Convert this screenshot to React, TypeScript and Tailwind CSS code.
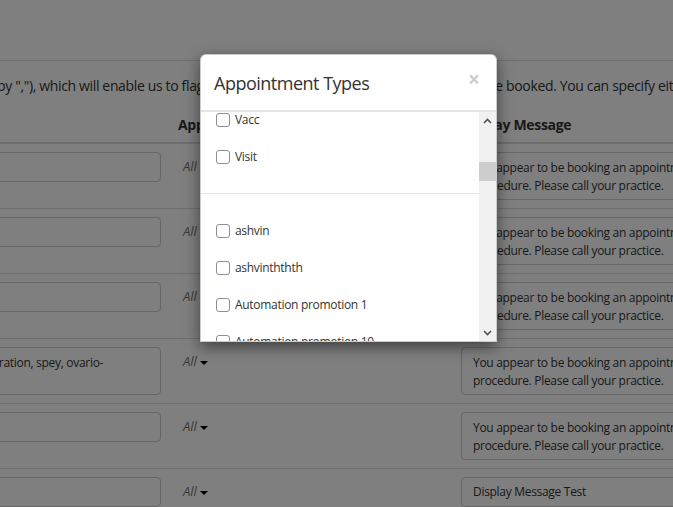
import React from "react";

type Row = {
  keywords: string;
  tall?: boolean;
  message: string;
  short?: boolean;
};

const surgical =
  "You appear to be booking an appointment for a surgical\nprocedure. Please call your practice.";

const rows: Row[] = [
  { keywords: "", message: surgical },
  { keywords: "", message: surgical },
  { keywords: "", message: surgical },
  {
    keywords: "Desexed, spayed, neuter, castration, spey, ovario-hysterectomy",
    tall: true,
    message: surgical,
  },
  { keywords: "", message: surgical },
  { keywords: "", message: "Display Message Test", short: true },
];

const typeGroups = [
  ["Vacc", "Visit"],
  ["ashvin", "ashvinththth", "Automation promotion 1", "Automation promotion 10", "Automation promotion 2"],
];

const Caret = () => (
  <span className="ml-[3px] inline-block h-0 w-0 border-x-[4px] border-t-[4px] border-x-transparent border-t-black align-middle" />
);

const Chevron = ({ up }: { up?: boolean }) => (
  <svg width="9" height="6" viewBox="0 0 9 6" className={up ? "" : "rotate-180"}>
    <path d="M1 5 L4.5 1.5 L8 5" fill="none" stroke="#505050" strokeWidth="1.6" />
  </svg>
);

const KeywordRow: React.FC<{ row: Row; first: boolean }> = ({ row, first }) => (
  <div
    className={`grid grid-cols-[349px_284px_500px] ${first ? "" : "border-t border-[#ddd]"}`}
  >
    <div className="px-2 py-2">
      <div
        className={`w-full rounded-[4px] border border-[#ccc] bg-white px-3 text-[12px] leading-[18px] tracking-[-0.3px] text-[#333] ${
          row.tall ? "h-[48px] py-[6px]" : "h-[30px]"
        }`}
      >
        {row.keywords}
      </div>
    </div>
    <div className="pl-[14px] pt-[13px] text-[13px] leading-[18px]">
      <span className="italic text-[#777]">All</span>
      <Caret />
    </div>
    <div className="py-2 pl-2">
      <div
        className={`w-full whitespace-pre-line rounded-[4px] border border-[#ccc] bg-white px-[11px] text-[12px] leading-[18px] tracking-[-0.3px] text-[#333] ${
          row.short ? "flex h-[30px] items-center" : "h-[48px] py-[6px]"
        }`}
      >
        {row.message}
      </div>
    </div>
  </div>
);

export default function App() {
  return (
    <div className="relative h-[507px] w-[673px] overflow-hidden bg-white font-['Open_Sans',sans-serif] text-[#333]">
      {/* page underneath, scrolled sideways */}
      <div className="h-[61px] border-b border-[#ddd]" />
      <p className="-ml-[3px] mt-[15px] whitespace-nowrap text-[14px] leading-[20px] tracking-[-0.35px]">
        by ","), which will enable us to flag appointments for any procedure that cannot be booked. You can specify either keywords or whole phrases.
      </p>
      <div className="-ml-[180px] mt-[11px] w-[1133px]">
        <div className="grid grid-cols-[349px_284px_500px] border-b-2 border-[#ddd] text-[14px] font-bold leading-[20px] tracking-[-0.3px]">
          <div className="px-2 pb-[7px] pt-2">Keywords</div>
          <div className="pb-[7px] pl-[9px] pt-2">Appointment Types</div>
          <div className="pb-[7px] pl-2 pt-2">Display Message</div>
        </div>
        {rows.map((row, i) => (
          <KeywordRow key={i} row={row} first={i === 0} />
        ))}
      </div>

      {/* backdrop */}
      <div className="absolute inset-0 bg-black/50" />

      {/* appointment types modal */}
      <div className="absolute left-[200px] top-[54px] flex w-[297px] flex-col overflow-hidden rounded-t-[6px] border border-black/20 bg-white shadow-[0_5px_15px_rgba(0,0,0,0.5)]">
        <div className="flex h-[57px] items-center justify-between border-b-2 border-[#e5e5e5] pl-[13px] pr-[16px]">
          <h4 className="text-[18px] leading-[24px] tracking-[-0.5px] text-[#333]">Appointment Types</h4>
          <span className="-mt-[6px] text-[21px] font-bold leading-none text-black opacity-20">×</span>
        </div>
        <div className="flex h-[229px]">
          <div className="flex-1 overflow-hidden">
            <div className="-mt-[11px]">
              {typeGroups.map((group, gi) => (
                <div key={gi}>
                  {gi > 0 && (
                    <div className="flex h-[37px] items-center">
                      <div className="h-px w-full bg-[#e5e5e5]" />
                    </div>
                  )}
                  {group.map((name) => (
                    <label
                      key={name}
                      className="flex h-[37px] items-center gap-[5px] pl-[15px] text-[12px] tracking-[-0.3px] text-[#333]"
                    >
                      <span className="size-[14px] shrink-0 rounded-[3px] border-[1.5px] border-[#8f8c9b] bg-white" />
                      {name}
                    </label>
                  ))}
                </div>
              ))}
            </div>
          </div>
          <div className="flex w-[17px] flex-col bg-[#f1f1f1]">
            <div className="flex h-[17px] items-center justify-center">
              <Chevron up />
            </div>
            <div className="mt-[33px] h-[19px] bg-[#cdcdcd]" />
            <div className="flex-1" />
            <div className="flex h-[17px] items-center justify-center">
              <Chevron />
            </div>
          </div>
        </div>
      </div>
    </div>
  );
}
